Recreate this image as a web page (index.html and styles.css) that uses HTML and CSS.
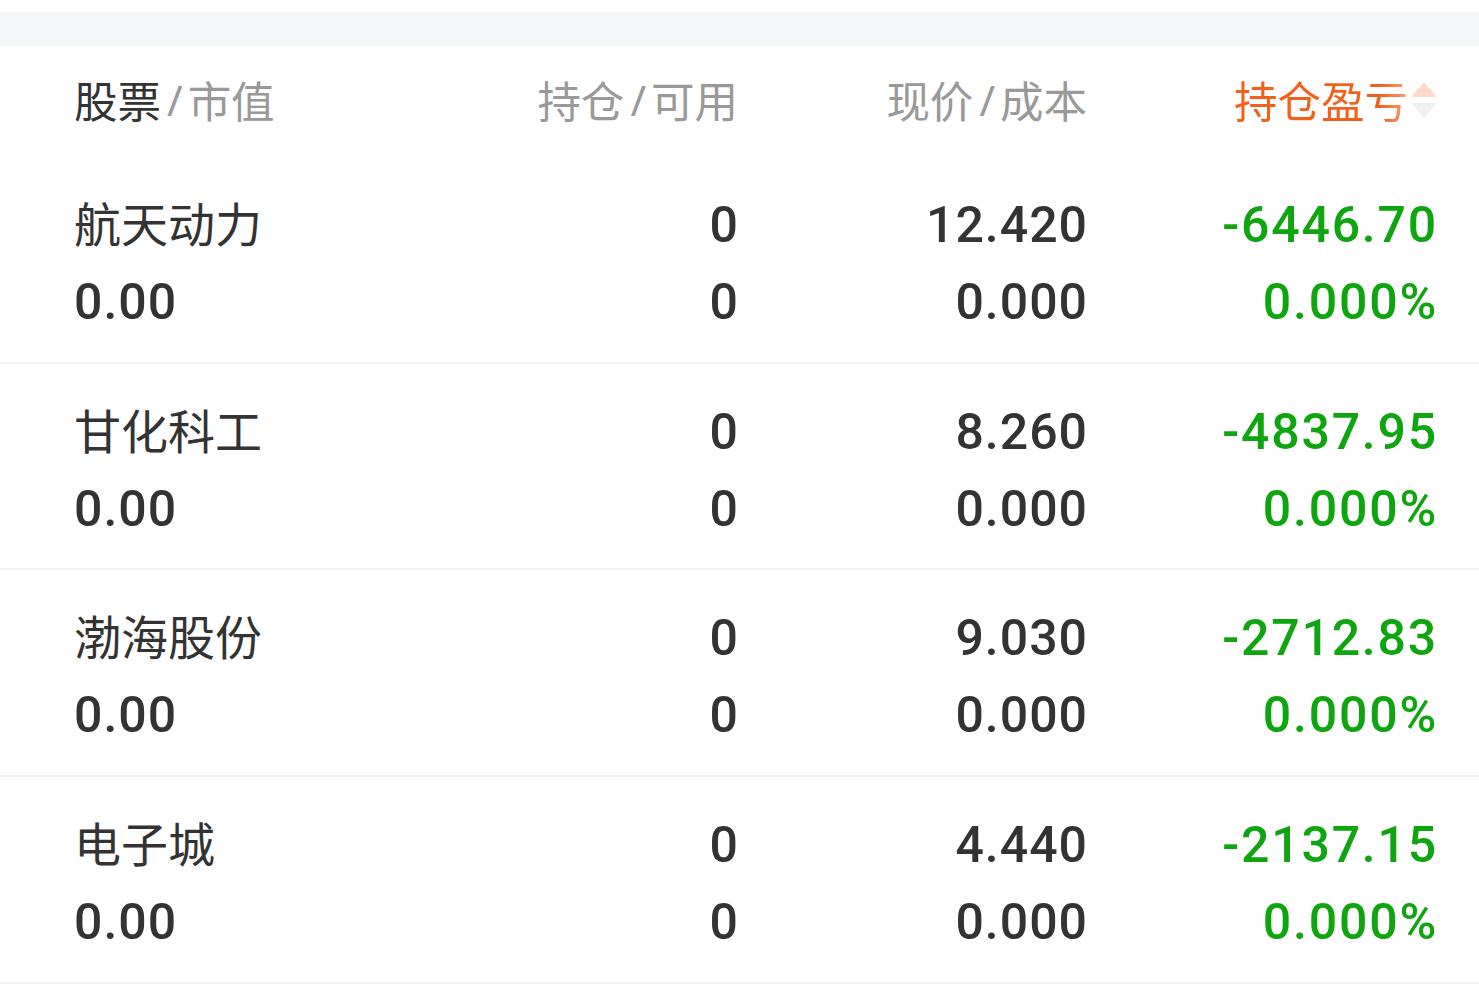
FILE: index.html
```html
<!DOCTYPE html>
<html lang="zh-CN">
<head>
<meta charset="utf-8">
<title>持仓</title>
<link rel="stylesheet" href="styles.css">
</head>
<body>
<div class="top-strip"></div>
<div class="band"></div>
<div class="table">
  <div class="head">
    <div class="hcell left"><span class="dark">股票</span><span class="sep">/</span>市值</div>
    <div class="hcell right">持仓<span class="sep">/</span>可用</div>
    <div class="hcell right">现价<span class="sep">/</span>成本</div>
    <div class="hcell right active"><span class="fade">持仓盈亏</span><span class="sort"><svg width="28" height="38" viewBox="0 0 28 38"><polygon points="1,16 27,16 14,1" fill="#fcd9c8"/><polygon points="1,22 27,22 14,37" fill="#f0f0f0"/></svg></span></div>
  </div>
  <div class="row">
    <div class="cell left"><div class="name">航天动力</div><div class="num">0.00</div></div>
    <div class="cell right"><div class="num">0</div><div class="num">0</div></div>
    <div class="cell right"><div class="num">12.420</div><div class="num">0.000</div></div>
    <div class="cell right green"><div class="num">-6446.70</div><div class="num">0.000%</div></div>
  </div>
  <div class="row">
    <div class="cell left"><div class="name">甘化科工</div><div class="num">0.00</div></div>
    <div class="cell right"><div class="num">0</div><div class="num">0</div></div>
    <div class="cell right"><div class="num">8.260</div><div class="num">0.000</div></div>
    <div class="cell right green"><div class="num">-4837.95</div><div class="num">0.000%</div></div>
  </div>
  <div class="row">
    <div class="cell left"><div class="name">渤海股份</div><div class="num">0.00</div></div>
    <div class="cell right"><div class="num">0</div><div class="num">0</div></div>
    <div class="cell right"><div class="num">9.030</div><div class="num">0.000</div></div>
    <div class="cell right green"><div class="num">-2712.83</div><div class="num">0.000%</div></div>
  </div>
  <div class="row">
    <div class="cell left"><div class="name">电子城</div><div class="num">0.00</div></div>
    <div class="cell right"><div class="num">0</div><div class="num">0</div></div>
    <div class="cell right"><div class="num">4.440</div><div class="num">0.000</div></div>
    <div class="cell right green"><div class="num">-2137.15</div><div class="num">0.000%</div></div>
  </div>
</div>
</body>
</html>
```

FILE: styles.css
```css
html, body {
  margin: 0;
  padding: 0;
  background: #ffffff;
}
body {
  font-family: "Noto Sans CJK SC", "Noto Sans", sans-serif;
  color: #333333;
  width: 1479px;
  overflow: hidden;
}
.top-strip {
  height: 12px;
  background: #ffffff;
}
.band {
  height: 34px;
  background: #f6f7f9;
}
.head, .row {
  display: grid;
  grid-template-columns: 330px 334px 349px 1fr;
  padding: 0 42px 0 74px;
}
.head {
  height: 111px;
  align-items: center;
  padding-bottom: 3px;
  box-sizing: border-box;
}
.hcell {
  font-size: 43.5px;
  line-height: 50px;
  color: #999999;
  display: flex;
  align-items: center;
}
.hcell.right {
  justify-content: flex-end;
}
.hcell .dark {
  color: #333333;
}
.hcell .sep {
  font-family: "Noto Sans", sans-serif;
  font-size: 42px;
  margin: 0 5px 0 6px;
  color: #999999;
}
.hcell.active {
  color: #f2601a;
  margin-right: -1px;
}
.fade {
  background: linear-gradient(90deg, #f2601a 0%, #f2601a 84%, #f7a27c 100%);
  -webkit-background-clip: text;
  background-clip: text;
  color: transparent;
}
.sort {
  display: flex;
  align-items: center;
  margin-left: 2px;
}
.sort svg {
  display: block;
}
.row {
  padding-top: 30px;
  padding-bottom: 20.67px;
  border-bottom: 2px solid #f2f2f2;
}
.cell {
  display: flex;
  flex-direction: column;
}
.cell.right {
  align-items: flex-end;
}
.name {
  font-size: 47px;
  line-height: 70px;
  height: 77px;
  color: #333333;
}
.num {
  font-family: Roboto, "Liberation Sans", sans-serif;
  font-weight: 500;
  font-size: 50px;
  letter-spacing: 1px;
  line-height: 77px;
  height: 77px;
  color: #333333;
}
.cell.right .num {
  margin-right: -1px;
}
.green .num {
  color: #0ea50e;
  letter-spacing: 1.8px;
  margin-right: -2px;
}
```
